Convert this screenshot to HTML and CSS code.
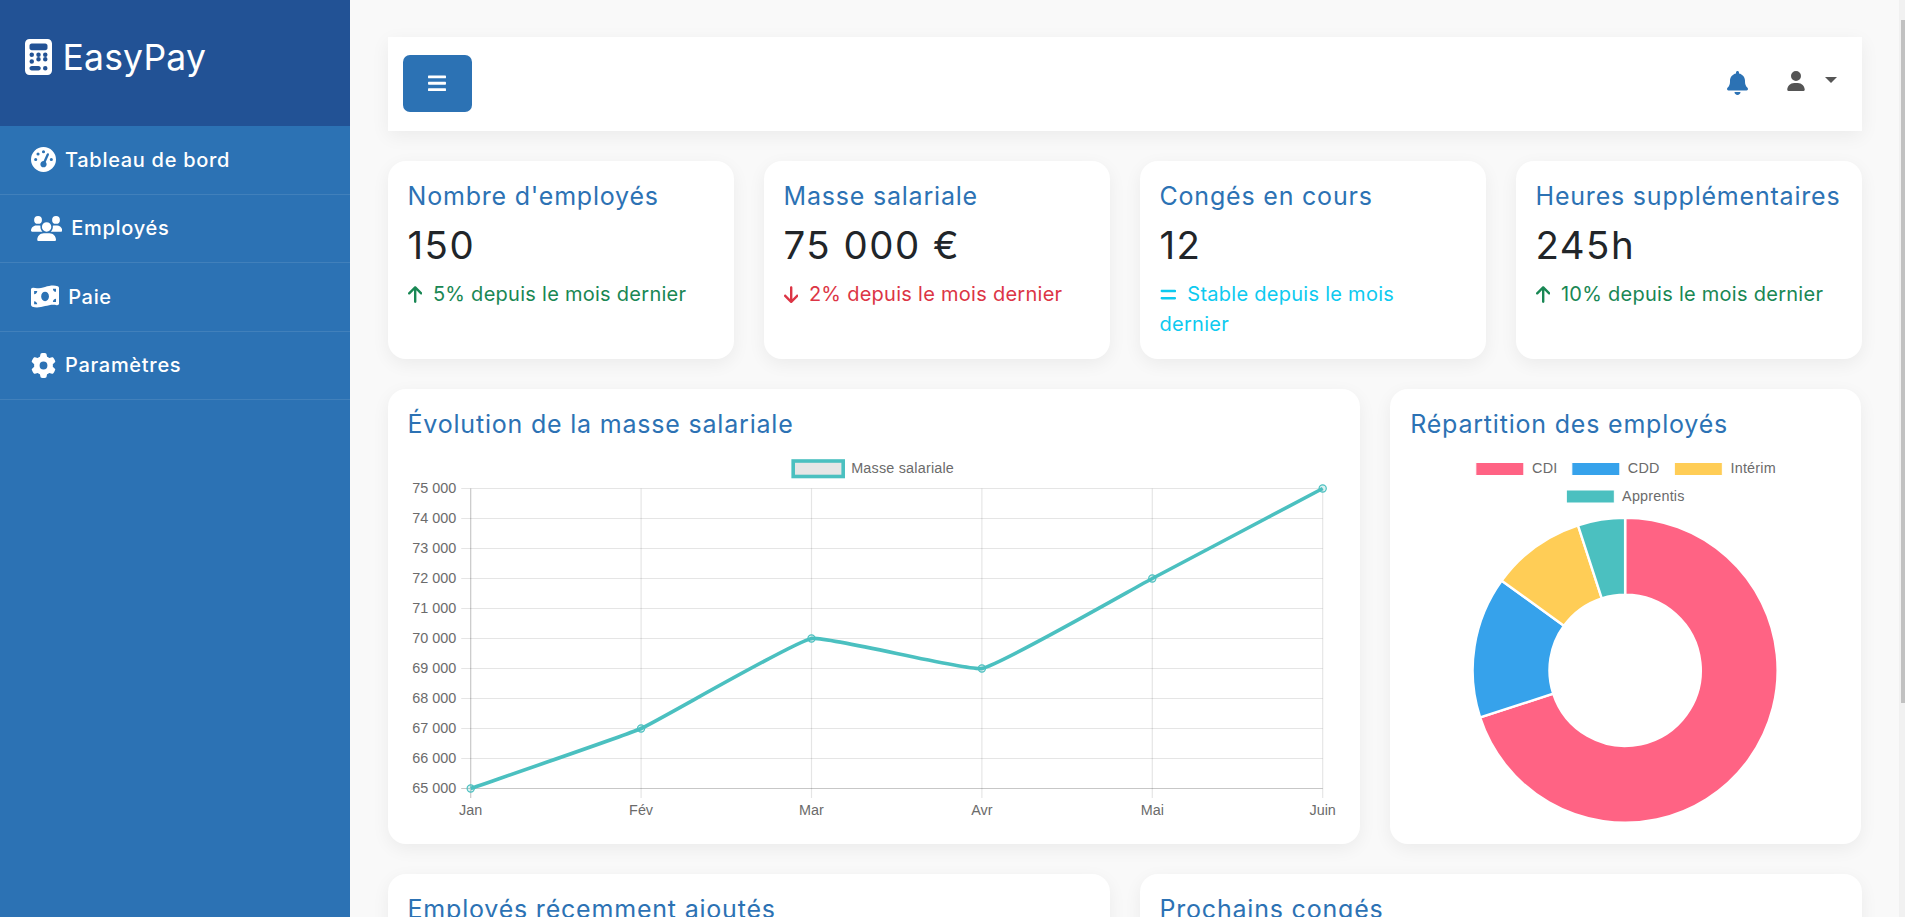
FILE: index.html
```html
<!DOCTYPE html>
<html lang="fr">
<head>
<meta charset="utf-8">
<title>EasyPay</title>
<link rel="stylesheet" href="styles.css">
</head>
<body>
<aside class="sidebar">
  <div class="brand">
    <svg class="brand-icon" viewBox="0 0 384 512"><path d="M64 0C28.7 0 0 28.7 0 64V448c0 35.3 28.7 64 64 64H320c35.3 0 64-28.7 64-64V64c0-35.3-28.7-64-64-64H64zM96 64H288c17.7 0 32 14.3 32 32v32c0 17.7-14.3 32-32 32H96c-17.7 0-32-14.3-32-32V96c0-17.7 14.3-32 32-32zm32 160a32 32 0 1 1 -64 0 32 32 0 1 1 64 0zM96 352a32 32 0 1 1 0-64 32 32 0 1 1 0 64zM64 416c0-17.7 14.3-32 32-32h96c17.7 0 32 14.3 32 32s-14.3 32-32 32H96c-17.7 0-32-14.3-32-32zM192 256a32 32 0 1 1 0-64 32 32 0 1 1 0 64zm32 32a32 32 0 1 1 -64 0 32 32 0 1 1 64 0zm64-32a32 32 0 1 1 0-64 32 32 0 1 1 0 64zm32 32a32 32 0 1 1 -64 0 32 32 0 1 1 64 0zM288 448a32 32 0 1 1 0-64 32 32 0 1 1 0 64z"/></svg>
    <span class="brand-name">EasyPay</span>
  </div>
  <nav class="menu">
    <a class="menu-item" href="#"><svg class="menu-icon" viewBox="0 0 512 512"><path d="M0 256a256 256 0 1 1 512 0A256 256 0 1 1 0 256zM288 96a32 32 0 1 0 -64 0 32 32 0 1 0 64 0zM256 416c35.3 0 64-28.7 64-64c0-17.4-6.9-33.1-18.1-44.6L366 161.7c5.3-12.1-.2-26.3-12.3-31.6s-26.3 .2-31.6 12.3L257.9 288c-.6 0-1.3 0-1.9 0c-35.3 0-64 28.7-64 64s28.7 64 64 64zM176 144a32 32 0 1 0 -64 0 32 32 0 1 0 64 0zM96 288a32 32 0 1 0 0-64 32 32 0 1 0 0 64zm352-32a32 32 0 1 0 -64 0 32 32 0 1 0 64 0z"/></svg>Tableau de bord</a>
    <a class="menu-item" href="#"><svg class="menu-icon" viewBox="0 0 640 512"><path d="M144 0a80 80 0 1 1 0 160A80 80 0 1 1 144 0zM512 0a80 80 0 1 1 0 160A80 80 0 1 1 512 0zM0 298.7C0 239.8 47.8 192 106.7 192h42.7c15.9 0 31 3.5 44.6 9.7c-1.3 7.2-1.9 14.7-1.9 22.3c0 38.2 16.8 72.5 43.3 96c-.2 0-.4 0-.7 0H21.3C9.6 320 0 310.4 0 298.7zM405.3 320c-.2 0-.4 0-.7 0c26.6-23.5 43.3-57.8 43.3-96c0-7.6-.7-15-1.9-22.3c13.6-6.3 28.7-9.7 44.6-9.7h42.7C592.2 192 640 239.8 640 298.7c0 11.8-9.6 21.3-21.3 21.3H405.3zM224 224a96 96 0 1 1 192 0 96 96 0 1 1 -192 0zM128 485.3C128 411.7 187.7 352 261.3 352H378.7C452.3 352 512 411.7 512 485.3c0 14.7-11.9 26.7-26.7 26.7H154.7c-14.7 0-26.7-11.9-26.7-26.7z"/></svg>Employés</a>
    <a class="menu-item" href="#"><svg class="menu-icon" viewBox="0 0 576 512"><path d="M0 112.5V422.3c0 18 10.1 35 27 41.3c87 32.5 174 10.3 261-11.9c79.8-20.3 159.6-40.7 239.3-18.9c23 6.3 48.7-9.5 48.7-33.4V89.7c0-18-10.1-35-27-41.3C462 15.9 375 38.1 288 60.3C208.2 80.6 128.4 100.9 48.7 79.1C25.6 72.8 0 88.6 0 112.5zM288 352c-44.2 0-80-43-80-96s35.8-96 80-96s80 43 80 96s-35.8 96-80 96zM64 352c35.3 0 64 28.7 64 64H64V352zm64-208c0 35.3-28.7 64-64 64V144h64zM512 304v64H448c0-35.3 28.7-64 64-64zM448 96h64v64c-35.3 0-64-28.7-64-64z"/></svg>Paie</a>
    <a class="menu-item" href="#"><svg class="menu-icon" viewBox="0 0 512 512"><path d="M495.9 166.6c3.2 8.7 .5 18.4-6.4 24.6l-43.3 39.4c1.1 8.3 1.7 16.8 1.7 25.4s-.6 17.1-1.7 25.4l43.3 39.4c6.9 6.2 9.6 15.9 6.4 24.6c-4.4 11.9-9.7 23.3-15.8 34.3l-4.7 8.1c-6.6 11-14 21.4-22.1 31.2c-5.9 7.2-15.7 9.6-24.5 6.8l-55.7-17.7c-13.4 10.3-28.2 18.9-44 25.4l-12.5 57.1c-2 9.1-9 16.3-18.2 17.8c-13.8 2.3-28 3.5-42.5 3.5s-28.7-1.2-42.5-3.5c-9.2-1.5-16.2-8.7-18.2-17.8l-12.5-57.1c-15.8-6.5-30.6-15.1-44-25.4L83.1 425.9c-8.8 2.8-18.6 .3-24.5-6.8c-8.1-9.8-15.5-20.2-22.1-31.2l-4.7-8.1c-6.1-11-11.4-22.4-15.8-34.3c-3.2-8.7-.5-18.4 6.4-24.6l43.3-39.4C64.6 273.1 64 264.6 64 256s.6-17.1 1.7-25.4L22.4 191.2c-6.9-6.2-9.6-15.9-6.4-24.6c4.4-11.9 9.7-23.3 15.8-34.3l4.7-8.1c6.6-11 14-21.4 22.1-31.2c5.9-7.2 15.7-9.6 24.5-6.8l55.7 17.7c13.4-10.3 28.2-18.9 44-25.4l12.5-57.1c2-9.1 9-16.3 18.2-17.8C227.3 1.2 241.5 0 256 0s28.7 1.2 42.5 3.5c9.2 1.5 16.2 8.7 18.2 17.8l12.5 57.1c15.8 6.5 30.6 15.1 44 25.4l55.7-17.7c8.8-2.8 18.6-.3 24.5 6.8c8.1 9.8 15.5 20.2 22.1 31.2l4.7 8.1c6.1 11 11.4 22.4 15.8 34.3zM256 336a80 80 0 1 0 0-160 80 80 0 1 0 0 160z"/></svg>Paramètres</a>
  </nav>
</aside>

<main class="main">
  <header class="topbar">
    <button class="toggle" type="button"><svg class="toggle-icon" viewBox="0 0 448 512"><path d="M16 132h416c8.837 0 16-7.163 16-16V76c0-8.837-7.163-16-16-16H16C7.163 60 0 67.163 0 76v40c0 8.837 7.163 16 16 16zm0 160h416c8.837 0 16-7.163 16-16v-40c0-8.837-7.163-16-16-16H16c-8.837 0-16 7.163-16 16v40c0 8.837 7.163 16 16 16zm0 160h416c8.837 0 16-7.163 16-16v-40c0-8.837-7.163-16-16-16H16c-8.837 0-16 7.163-16 16v40c0 8.837 7.163 16 16 16z"/></svg></button>
    <div class="top-actions">
      <svg class="bell" viewBox="0 0 448 512"><path d="M224 0c-17.7 0-32 14.3-32 32V51.2C119 66 64 130.6 64 208v18.8c0 47-17.3 92.4-48.5 127.6l-7.4 8.3c-8.4 9.4-10.4 22.9-5.3 34.4S19.4 416 32 416H416c12.6 0 24-7.4 29.2-18.9s3.1-25-5.3-34.4l-7.4-8.3C401.3 319.2 384 273.9 384 226.8V208c0-77.4-55-142-128-156.8V32c0-17.7-14.3-32-32-32zm45.3 493.3c12-12 18.7-28.3 18.7-45.3H224 160c0 17 6.7 33.3 18.7 45.3s28.3 18.7 45.3 18.7s33.3-6.7 45.3-18.7z"/></svg>
      <svg class="user" viewBox="0 0 448 512"><path d="M224 256A128 128 0 1 0 224 0a128 128 0 1 0 0 256zm-45.7 48C79.8 304 0 383.8 0 482.3C0 498.7 13.3 512 29.7 512H418.3c16.4 0 29.7-13.3 29.7-29.7C448 383.8 368.2 304 269.7 304H178.3z"/></svg>
      <span class="caret"></span>
    </div>
  </header>

  <section class="row">
    <article class="col-3 card stat">
      <h5 class="card-title">Nombre d'employés</h5>
      <div class="stat-value">150</div>
      <p class="trend trend-up"><svg class="trend-icon" viewBox="0 0 384 512"><path d="M214.6 41.4c-12.5-12.5-32.8-12.5-45.3 0l-160 160c-12.5 12.5-12.5 32.8 0 45.3s32.8 12.5 45.3 0L160 141.2V448c0 17.7 14.3 32 32 32s32-14.3 32-32V141.2L329.4 246.6c12.5 12.5 32.8 12.5 45.3 0s12.5-32.8 0-45.3l-160-160z"/></svg>5% depuis le mois dernier</p>
    </article>
    <article class="col-3 card stat">
      <h5 class="card-title">Masse salariale</h5>
      <div class="stat-value">75 000 €</div>
      <p class="trend trend-down"><svg class="trend-icon" viewBox="0 0 384 512"><path d="M169.4 470.6c12.5 12.5 32.8 12.5 45.3 0l160-160c12.5-12.5 12.5-32.8 0-45.3s-32.8-12.5-45.3 0L224 370.8 224 64c0-17.7-14.3-32-32-32s-32 14.3-32 32l0 306.7L54.6 265.4c-12.5-12.5-32.8-12.5-45.3 0s-12.5 32.8 0 45.3l160 160z"/></svg>2% depuis le mois dernier</p>
    </article>
    <article class="col-3 card stat">
      <h5 class="card-title">Congés en cours</h5>
      <div class="stat-value">12</div>
      <p class="trend trend-flat"><svg class="trend-icon trend-icon-eq" viewBox="0 0 448 512"><path d="M48 128c-17.7 0-32 14.3-32 32s14.3 32 32 32H400c17.7 0 32-14.3 32-32s-14.3-32-32-32H48zm0 192c-17.7 0-32 14.3-32 32s14.3 32 32 32H400c17.7 0 32-14.3 32-32s-14.3-32-32-32H48z"/></svg>Stable depuis le mois dernier</p>
    </article>
    <article class="col-3 card stat">
      <h5 class="card-title">Heures supplémentaires</h5>
      <div class="stat-value">245h</div>
      <p class="trend trend-up"><svg class="trend-icon" viewBox="0 0 384 512"><path d="M214.6 41.4c-12.5-12.5-32.8-12.5-45.3 0l-160 160c-12.5 12.5-12.5 32.8 0 45.3s32.8 12.5 45.3 0L160 141.2V448c0 17.7 14.3 32 32 32s32-14.3 32-32V141.2L329.4 246.6c12.5 12.5 32.8 12.5 45.3 0s12.5-32.8 0-45.3l-160-160z"/></svg>10% depuis le mois dernier</p>
    </article>
  </section>

  <section class="row">
    <article class="col-8 card chart-card">
      <h5 class="card-title">Évolution de la masse salariale</h5>
      <svg class="chart" viewBox="407.8 452 932.67 372" preserveAspectRatio="xMinYMin meet">
        <rect class="legend-line-box" x="793" y="461" width="50" height="15.5"/>
        <text class="chart-text legend-text" x="851" y="473">Masse salariale</text>
        <g class="grid">
          <path d="M461 488.5H1322.5M461 518.5H1322.5M461 548.5H1322.5M461 578.5H1322.5M461 608.5H1322.5M461 638.5H1322.5M461 668.5H1322.5M461 698.5H1322.5M461 728.5H1322.5M461 758.5H1322.5"/>
          <path d="M640.9 488.5V798M811.3 488.5V798M981.7 488.5V798M1152.1 488.5V798M1322.5 488.5V798"/>
        </g>
        <path class="axis" d="M470.5 488.5V798M461 788.5H1322.5"/>
        <g class="chart-text tick-y">
          <text x="456" y="493.5">75 000</text>
          <text x="456" y="523.5">74 000</text>
          <text x="456" y="553.5">73 000</text>
          <text x="456" y="583.5">72 000</text>
          <text x="456" y="613.5">71 000</text>
          <text x="456" y="643.5">70 000</text>
          <text x="456" y="673.5">69 000</text>
          <text x="456" y="703.5">68 000</text>
          <text x="456" y="733.5">67 000</text>
          <text x="456" y="763.5">66 000</text>
          <text x="456" y="793.5">65 000</text>
        </g>
        <g class="chart-text tick-x">
          <text x="470.5" y="815">Jan</text>
          <text x="640.9" y="815">Fév</text>
          <text x="811.3" y="815">Mar</text>
          <text x="981.7" y="815">Avr</text>
          <text x="1152.1" y="815">Mai</text>
          <text x="1322.5" y="815">Juin</text>
        </g>
        <path class="series" d="M470.5 788.5C487.5 782.5 624.41 735.76 640.9 728.5C658.49 720.76 793.34 641.66 811.3 638.5C827.42 635.66 965.58 671.34 981.7 668.5C999.66 665.34 1135.06 587.5 1152.1 578.5C1169.14 569.5 1305.46 497.5 1322.5 488.5"/>
        <g class="points">
          <circle cx="470.5" cy="788.5" r="3.6"/>
          <circle cx="640.9" cy="728.5" r="3.6"/>
          <circle cx="811.3" cy="638.5" r="3.6"/>
          <circle cx="981.7" cy="668.5" r="3.6"/>
          <circle cx="1152.1" cy="578.5" r="3.6"/>
          <circle cx="1322.5" cy="488.5" r="3.6"/>
        </g>
      </svg>
    </article>
    <article class="col-4 card chart-card">
      <h5 class="card-title">Répartition des employés</h5>
      <svg class="chart" viewBox="1410.17 452 431.33 372" preserveAspectRatio="xMinYMin meet">
        <rect class="swatch c-pink" x="1476" y="462.5" width="48" height="13"/>
        <text class="chart-text legend-text" x="1532.3" y="473">CDI</text>
        <rect class="swatch c-blue" x="1572" y="462.5" width="48" height="13"/>
        <text class="chart-text legend-text" x="1628" y="473">CDD</text>
        <rect class="swatch c-yellow" x="1674.5" y="462.5" width="48" height="13"/>
        <text class="chart-text legend-text" x="1730.7" y="473">Intérim</text>
        <rect class="swatch c-teal" x="1566.5" y="490" width="48" height="13"/>
        <text class="chart-text legend-text" x="1622.3" y="500.7">Apprentis</text>
        <g class="donut">
          <path class="c-pink" d="M1625.3 517.8A152.5 152.5 0 1 1 1480.26 717.43L1553.35 693.68A75.65 75.65 0 1 0 1625.3 594.65Z"/>
          <path class="c-blue" d="M1480.26 717.43A152.5 152.5 0 0 1 1501.92 580.66L1564.1 625.83A75.65 75.65 0 0 0 1553.35 693.68Z"/>
          <path class="c-yellow" d="M1501.92 580.66A152.5 152.5 0 0 1 1578.17 525.26L1601.92 598.35A75.65 75.65 0 0 0 1564.1 625.83Z"/>
          <path class="c-teal" d="M1578.17 525.26A152.5 152.5 0 0 1 1625.3 517.8V594.65A75.65 75.65 0 0 0 1601.92 598.35Z"/>
        </g>
      </svg>
    </article>
  </section>

  <section class="row">
    <article class="col-6 card list-card">
      <h5 class="card-title">Employés récemment ajoutés</h5>
    </article>
    <article class="col-6 card list-card">
      <h5 class="card-title">Prochains congés</h5>
    </article>
  </section>
</main>

<div class="scrollbar"><div class="scrollbar-thumb"></div></div>
</body>
</html>
```
FILE: styles.css
```css
* { box-sizing: border-box; }

html { background: #f9f9f9; }

body {
  margin: 0;
  display: flex;
  min-height: 100vh;
  font-family: Inter, "Liberation Sans", sans-serif;
  color: #212529;
  background: #f9f9f9;
}

.scrollbar {
  flex: 0 0 6px;
  padding: 20px 0 0 2px;
  background: #f1f1f1;
}
.scrollbar-thumb { height: 683px; background: #c1c1c1; }

.sidebar {
  flex: 0 0 350px;
  background: #2c72b4;
  color: #fff;
}

.brand {
  height: 126px;
  padding: 31px 24px 0 24.5px;
  display: flex;
  align-items: flex-start;
  gap: 11px;
  background: #225295;
}
.brand-icon { width: 27px; height: 36px; margin-top: 8px; fill: #fff; flex: none; }
.brand-name { margin-top: 1px; font-size: 35.5px; line-height: 52px; letter-spacing: .2px; }

.menu-item {
  display: flex;
  align-items: center;
  gap: 9px;
  height: 68.5px;
  padding-left: 31px;
  border-bottom: 1px solid rgba(255, 255, 255, .1);
  color: #fff;
  text-decoration: none;
  font-size: 20px;
  font-weight: 500;
  letter-spacing: .7px;
}
.menu-icon { height: 25px; width: auto; fill: #fff; flex: none; }

.main {
  flex: 1 1 0;
  min-width: 0;
  padding: 37px 37.5px;
}

.topbar {
  height: 94px;
  margin-bottom: 30px;
  padding: 0 25px 0 15px;
  display: flex;
  align-items: center;
  justify-content: space-between;
  background: #fff;
  box-shadow: 0 5px 18px rgba(0, 0, 0, .06);
}
.toggle {
  width: 69px;
  height: 57px;
  margin-bottom: 1px;
  padding: 0;
  border: 0;
  border-radius: 7px;
  background: #2c72b4;
  display: flex;
  align-items: center;
  justify-content: center;
}
.toggle-icon { width: 18px; height: 20.5px; fill: #fff; }

.top-actions { display: flex; align-items: flex-start; margin-bottom: 2.6px; }
.bell { width: 21px; height: 24px; fill: #2c72b4; margin-right: 39px; }
.user { width: 18px; height: 20px; fill: #555; margin-right: 20px; }
.caret {
  margin-top: 6px;
  border-top: 6px solid #555;
  border-left: 6px solid transparent;
  border-right: 6px solid transparent;
}

.row {
  display: flex;
  gap: 30px;
  margin-bottom: 30px;
}
.row:last-child { margin-bottom: 0; }

.card {
  background: #fff;
  border-radius: 18px;
  padding: 20px;
  box-shadow: 0 5px 18px rgba(0, 0, 0, .06);
}
.col-3 { flex: 0 0 346px; }
.col-4 { flex: 0 0 471.33px; }
.col-6 { flex: 0 0 722px; }
.col-8 { flex: 0 0 972.67px; }

.card-title {
  margin: 0;
  font-size: 25px;
  line-height: 30px;
  font-weight: 400;
  letter-spacing: .8px;
  color: #2c72b4;
}

.stat { height: 198px; }
.stat-value {
  margin-top: 5px;
  font-size: 38.4px;
  line-height: 58px;
  letter-spacing: 1.5px;
  color: #212529;
}

.trend { margin: 5px 0 0; font-size: 20px; line-height: 30px; letter-spacing: .27px; }
.trend-up { color: #198754; }
.trend-down { color: #dc3545; }
.trend-flat { color: #0dcaf0; }
.trend-icon { width: 14.4px; height: 19.2px; margin-right: 11px; vertical-align: -3px; fill: currentColor; }
.trend-icon-eq { width: 16.8px; }

.chart-card { height: 455px; }
.chart-card .card-title { margin-bottom: 13px; }
.chart { display: block; width: 100%; height: 372px; overflow: visible; }

.chart-text { font-family: "Liberation Sans", Arial, sans-serif; font-size: 14.4px; fill: #6b6b6b; }
.legend-text { letter-spacing: .2px; }
.tick-y { text-anchor: end; }
.tick-x { text-anchor: middle; }

.grid path { fill: none; stroke: rgba(0, 0, 0, .1); stroke-width: 1.2; }
.axis { fill: none; stroke: rgba(0, 0, 0, .22); stroke-width: 1.2; }
.series { fill: none; stroke: #4bc0c0; stroke-width: 3.6; }
.points circle { fill: rgba(75, 192, 192, .2); stroke: #4bc0c0; stroke-width: 1.2; }
.legend-line-box { fill: #e6e6e6; stroke: #4bc0c0; stroke-width: 3.6; }

.swatch { stroke: #fff; stroke-width: 1; }
.donut path { stroke: #fff; stroke-width: 2.4; }
.c-pink { fill: #ff6384; }
.c-blue { fill: #36a2eb; }
.c-yellow { fill: #ffcd56; }
.c-teal { fill: #4bc0c0; }

.list-card { height: 266px; }
```
